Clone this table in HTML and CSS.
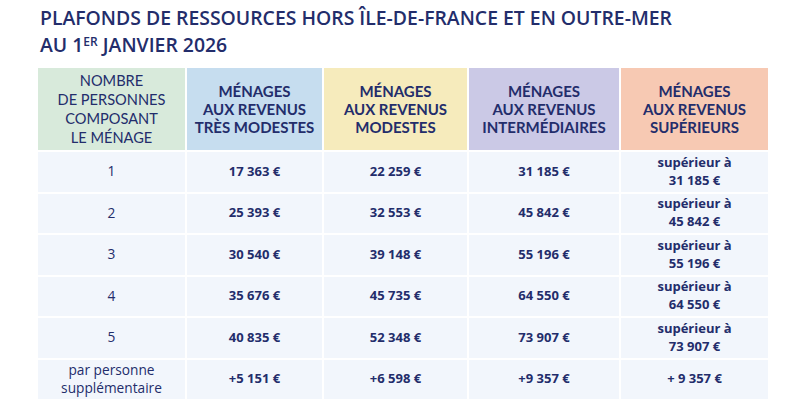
FILE: index.html
```html
<!DOCTYPE html>
<html lang="fr">
<head>
<meta charset="utf-8">
<link rel="stylesheet" href="styles.css">
</head>
<body>
<div class="page">
  <h1 class="title">PLAFONDS DE RESSOURCES HORS ÎLE-DE-FRANCE ET EN OUTRE-MER<br>AU 1<sup class="sup">ER</sup> JANVIER 2026</h1>
  <div class="table">
    <div class="th th-green light">NOMBRE<br>DE PERSONNES<br>COMPOSANT<br>LE MÉNAGE</div>
    <div class="th th-blue">MÉNAGES<br>AUX REVENUS<br>TRÈS MODESTES</div>
    <div class="th th-yellow">MÉNAGES<br>AUX REVENUS<br>MODESTES</div>
    <div class="th th-purple">MÉNAGES<br>AUX REVENUS<br>INTERMÉDIAIRES</div>
    <div class="th th-salmon">MÉNAGES<br>AUX REVENUS<br>SUPÉRIEURS</div>

    <div class="td light">1</div>
    <div class="td">17 363 €</div>
    <div class="td">22 259 €</div>
    <div class="td">31 185 €</div>
    <div class="td two">supérieur à<br>31 185 €</div>

    <div class="td light">2</div>
    <div class="td">25 393 €</div>
    <div class="td">32 553 €</div>
    <div class="td">45 842 €</div>
    <div class="td two">supérieur à<br>45 842 €</div>

    <div class="td light">3</div>
    <div class="td">30 540 €</div>
    <div class="td">39 148 €</div>
    <div class="td">55 196 €</div>
    <div class="td two">supérieur à<br>55 196 €</div>

    <div class="td light">4</div>
    <div class="td">35 676 €</div>
    <div class="td">45 735 €</div>
    <div class="td">64 550 €</div>
    <div class="td two">supérieur à<br>64 550 €</div>

    <div class="td light">5</div>
    <div class="td">40 835 €</div>
    <div class="td">52 348 €</div>
    <div class="td">73 907 €</div>
    <div class="td two">supérieur à<br>73 907 €</div>

    <div class="td light two">par personne<br>supplémentaire</div>
    <div class="td">+5 151 €</div>
    <div class="td">+6 598 €</div>
    <div class="td">+9 357 €</div>
    <div class="td">+ 9 357 €</div>
  </div>
</div>
</body>
</html>
```
FILE: styles.css
```css
html, body {
  margin: 0;
  padding: 0;
  background: #ffffff;
}

.page {
  padding: 4px 0 0 38px;
  font-family: "Open Sans", "Liberation Sans", sans-serif;
  color: #232d6b;
}

.title {
  margin: 0 0 10px 2px;
  font-size: 19.4px;
  line-height: 27px;
  font-weight: 600;
  color: #232d6b;
  letter-spacing: 0;
}

.sup {
  font-size: 12px;
  vertical-align: 6px;
  line-height: 0;
}

.table {
  display: grid;
  grid-template-columns: 147px 135px 143px 150px 147px;
  grid-template-rows: 82px repeat(6, 39.5px);
  column-gap: 2px;
  row-gap: 2px;
}

.th {
  display: flex;
  align-items: center;
  justify-content: center;
  text-align: center;
  font-family: Lato, "Open Sans", sans-serif;
  font-size: 15px;
  line-height: 18px;
  font-weight: 700;
}

.th.light {
  font-weight: 400;
  font-size: 14.6px;
  line-height: 19px;
}

.th-green { background: #d8eadb; }
.th-blue { background: #c6ddef; }
.th-yellow { background: #f6ebbc; }
.th-purple { background: #cbc9e6; }
.th-salmon { background: #f7c9b3; }

.td {
  display: flex;
  align-items: center;
  justify-content: center;
  text-align: center;
  background: #f2f6fc;
  font-size: 13px;
  font-weight: 700;
  line-height: 17.8px;
}

.td.light {
  font-weight: 400;
  font-size: 13.7px;
  line-height: 18.7px;
}
```
